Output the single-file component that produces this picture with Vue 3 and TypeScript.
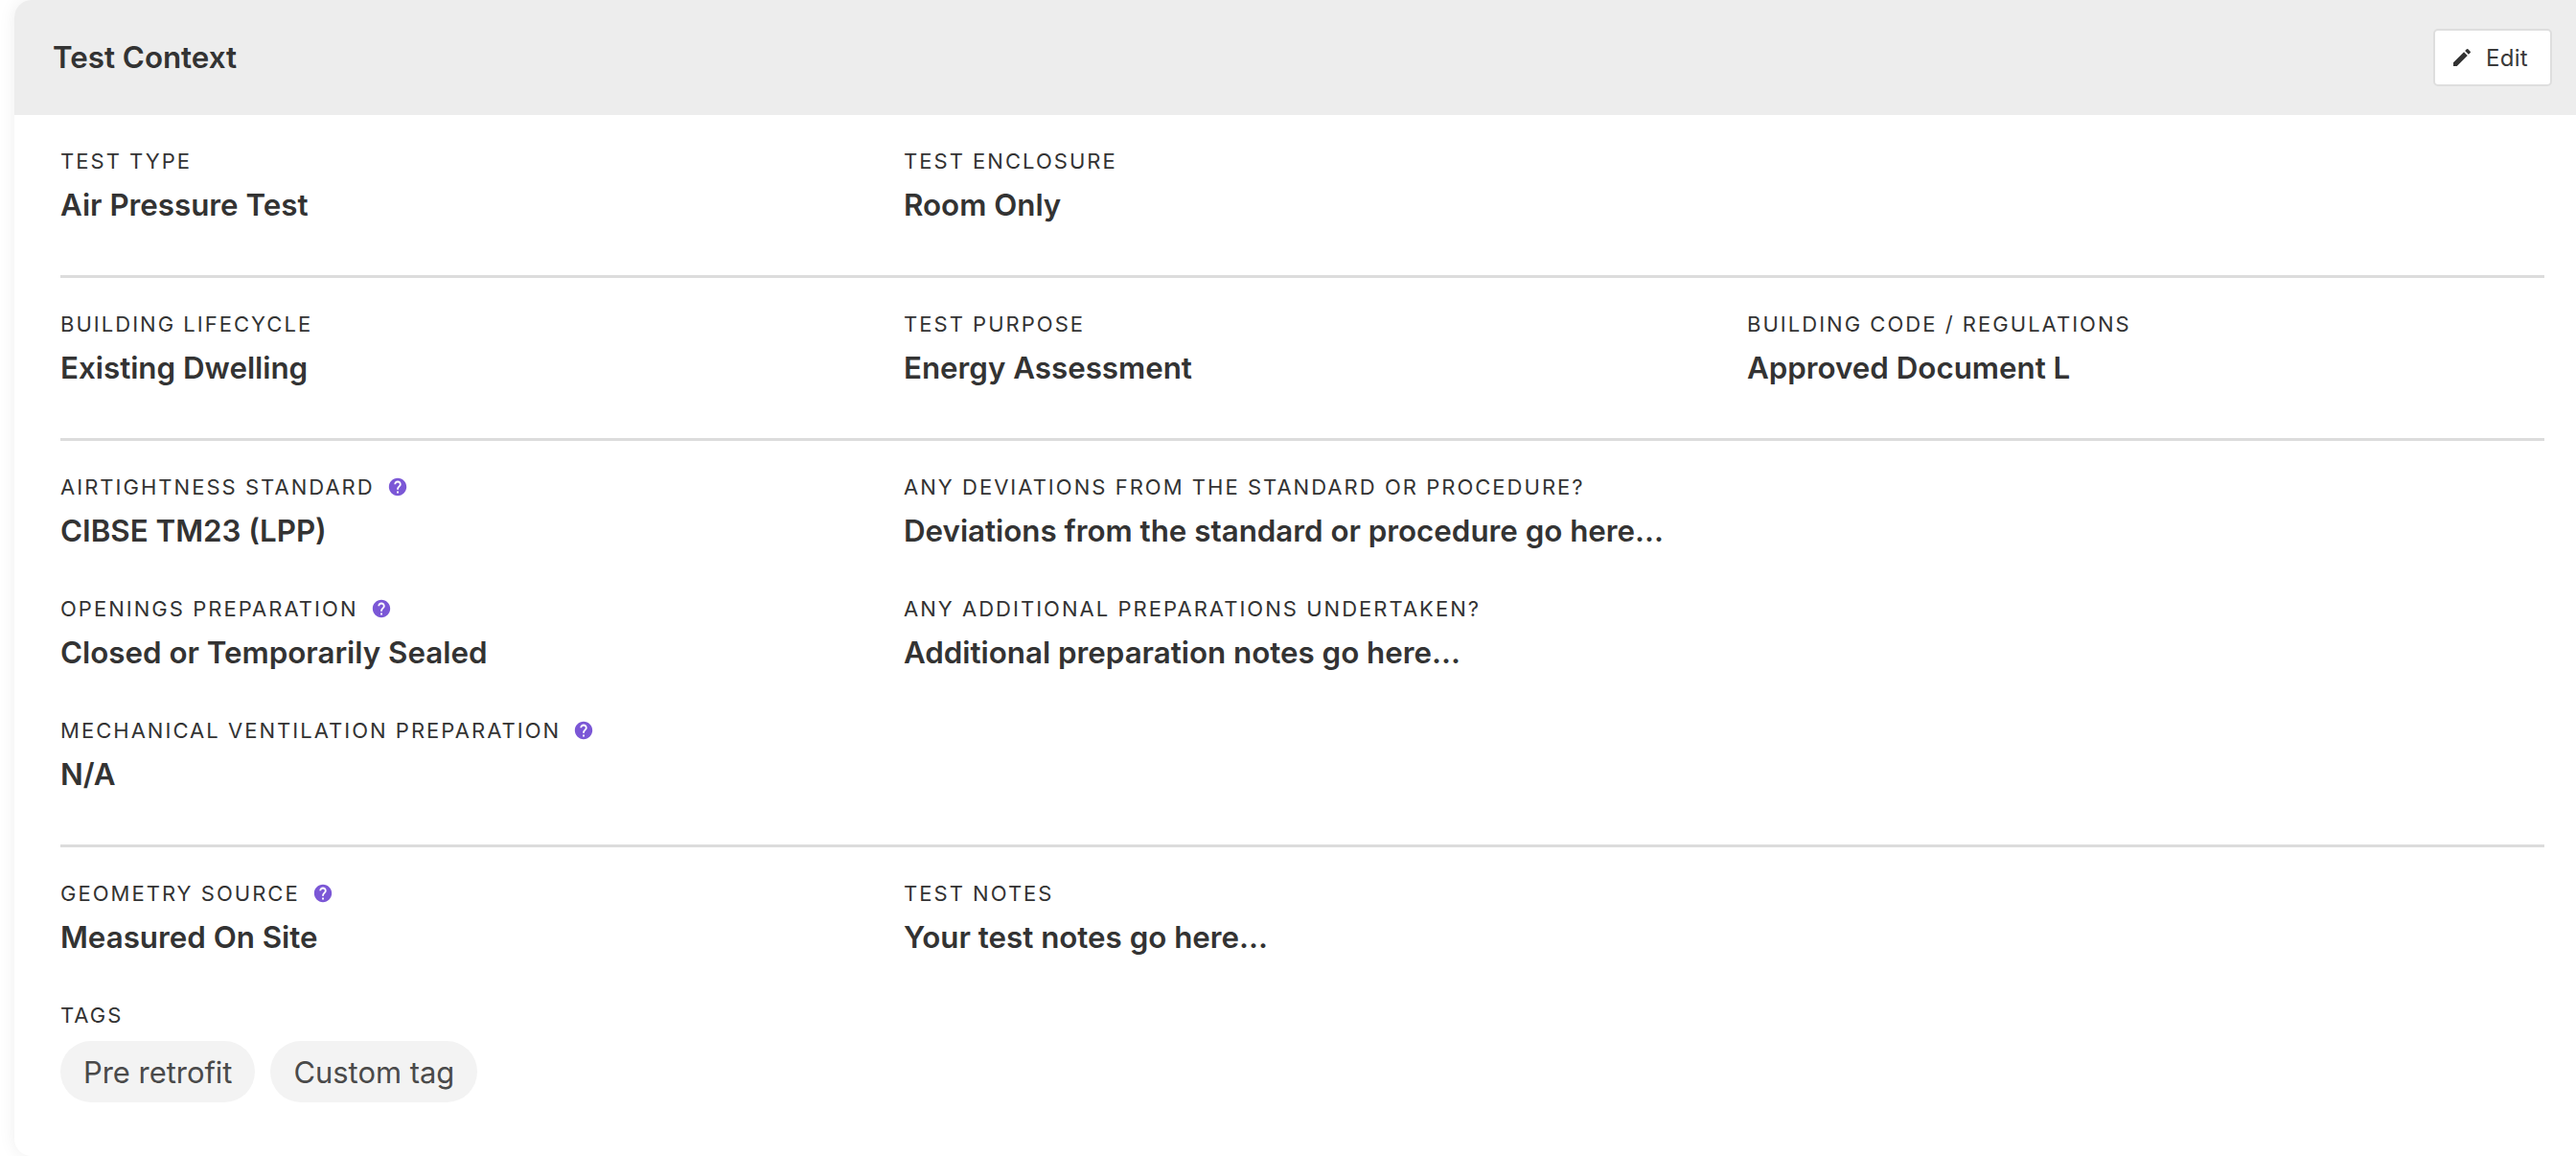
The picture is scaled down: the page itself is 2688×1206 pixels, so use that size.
<script setup lang="ts">
interface Field {
  label: string;
  value?: string;
  help?: boolean;
  tags?: string[];
}
const sections: Field[][] = [
  [
    { label: 'Test type', value: 'Air Pressure Test' },
    { label: 'Test enclosure', value: 'Room Only' },
  ],
  [
    { label: 'Building lifecycle', value: 'Existing Dwelling' },
    { label: 'Test purpose', value: 'Energy Assessment' },
    { label: 'Building code / regulations', value: 'Approved Document L' },
  ],
  [
    { label: 'Airtightness standard', value: 'CIBSE TM23 (LPP)', help: true },
    { label: 'Any deviations from the standard or procedure?', value: 'Deviations from the standard or procedure go here...' },
    { label: '' },
    { label: 'Openings preparation', value: 'Closed or Temporarily Sealed', help: true },
    { label: 'Any additional preparations undertaken?', value: 'Additional preparation notes go here...' },
    { label: '' },
    { label: 'Mechanical ventilation preparation', value: 'N/A', help: true },
  ],
  [
    { label: 'Geometry source', value: 'Measured On Site', help: true },
    { label: 'Test notes', value: 'Your test notes go here...' },
    { label: '' },
    { label: 'Tags', tags: ['Pre retrofit', 'Custom tag'] },
  ],
];
</script>

<template>
  <div class="page">
    <section class="card">
      <header class="head">
        <h2 class="title">Test Context</h2>
        <button class="edit" type="button">
          <svg class="pencil" viewBox="0 0 24 24" aria-hidden="true">
            <path d="M3 17.25V21h3.75L17.81 9.94l-3.75-3.75L3 17.25zM20.71 7.04a1 1 0 0 0 0-1.41l-2.34-2.34a1 1 0 0 0-1.41 0l-1.83 1.83 3.75 3.75 1.83-1.83z" />
          </svg>
          <span>Edit</span>
        </button>
      </header>
      <div class="body">
        <div v-for="(section, s) in sections" :key="s" class="section">
          <div v-for="(field, f) in section" :key="f" class="field">
            <template v-if="field.label">
              <div class="label">
                <span>{{ field.label }}</span>
                <svg v-if="field.help" class="help" viewBox="0 0 24 24" aria-hidden="true">
                  <path d="M12 2C6.48 2 2 6.48 2 12s4.48 10 10 10 10-4.48 10-10S17.52 2 12 2zm1 17h-2v-2h2v2zm2.07-7.75-.9.92C13.45 12.9 13 13.5 13 15h-2v-.5c0-1.1.45-2.1 1.17-2.83l1.24-1.26c.37-.36.59-.86.59-1.41 0-1.1-.9-2-2-2s-2 .9-2 2H8c0-2.21 1.79-4 4-4s4 1.79 4 4c0 .88-.36 1.68-.93 2.25z" />
                </svg>
              </div>
              <div v-if="field.value" class="value">{{ field.value }}</div>
              <div v-if="field.tags" class="tags">
                <span v-for="tag in field.tags" :key="tag" class="tag">{{ tag }}</span>
              </div>
            </template>
          </div>
        </div>
      </div>
    </section>
  </div>
</template>

<style>
html, body { margin: 0; background: #fff; overflow: hidden; }
</style>

<style scoped>
.page {
  width: 2688px;
  height: 1206px;
  padding-left: 15px;
  box-sizing: border-box;
  overflow: hidden;
  font-family: Inter, "Liberation Sans", sans-serif;
  color: #333;
}
.card {
  height: 1206px;
  background: #fff;
  border-radius: 18px;
  box-shadow: 0 0 18px rgba(0, 0, 0, 0.07);
  overflow: hidden;
  margin-right: -20px;
}
.head {
  height: 120px;
  box-sizing: border-box;
  background: #ededed;
  display: flex;
  align-items: center;
  justify-content: space-between;
  padding: 0 45px 0 40px;
}
.title {
  margin: 0;
  font-size: 31.3px;
  font-weight: 600;
  color: #333;
}
.edit {
  width: 124px;
  height: 60px;
  box-sizing: border-box;
  display: flex;
  align-items: center;
  justify-content: flex-start;
  gap: 13px;
  background: #fff;
  border: 2px solid #dedede;
  border-radius: 5px;
  font-family: inherit;
  font-size: 24px;
  letter-spacing: 0.3px;
  color: #3a3a3a;
  padding: 0 0 0 16px;
}
.pencil { width: 24px; height: 24px; fill: #333; }
.body { padding: 34px 33px 0 48px; }
.section {
  display: grid;
  grid-template-columns: repeat(3, 864px);
  column-gap: 16px;
  row-gap: 48px;
  padding-bottom: 54px;
  margin-bottom: 34px;
  border-bottom: 3px solid #dcdcdc;
  width: 2592px;
}
.section:last-child { border-bottom: 0; }
.label {
  display: flex;
  align-items: center;
  gap: 13px;
  height: 28px;
  font-size: 22px;
  letter-spacing: 2.03px;
  text-transform: uppercase;
  color: #333;
}
.help { width: 22px; height: 22px; fill: #7b57d6; }
.value {
  margin-top: 13px;
  font-size: 31.3px;
  line-height: 38px;
  font-weight: 600;
  color: #333;
}
.tags { display: flex; gap: 16px; margin-top: 13px; }
.tag {
  height: 64px;
  line-height: 65px;
  padding: 0 24px;
  border-radius: 32px;
  background: #f3f3f3;
  font-size: 30.9px;
  color: #4a4a4a;
}
</style>
